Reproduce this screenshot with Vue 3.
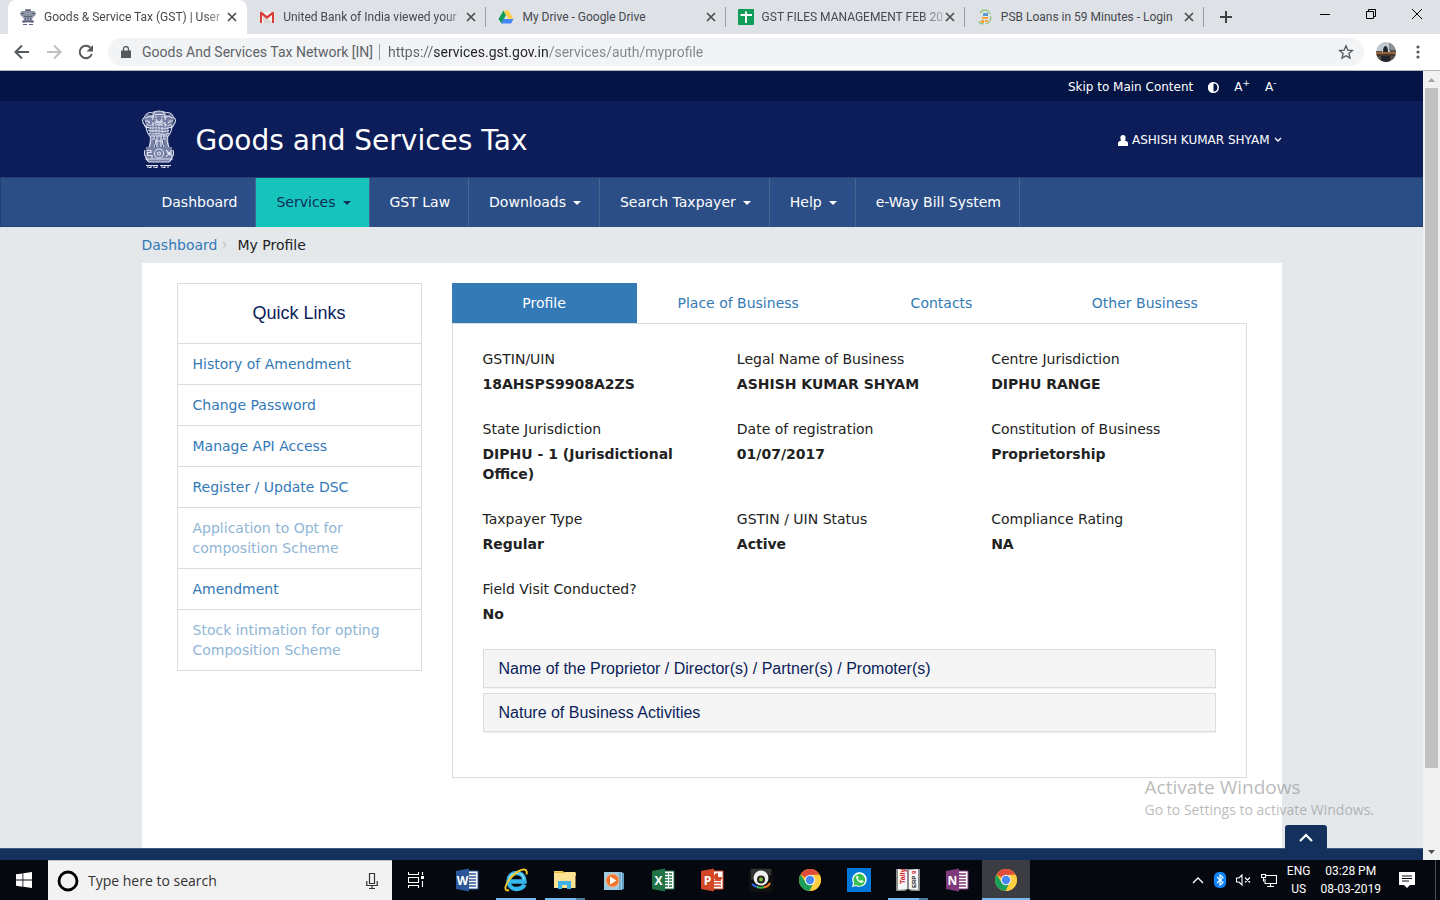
<script setup>
import { ref } from 'vue'

const browserTabs = [
  { title: 'Goods & Service Tax (GST) | User', icon: 'lions', active: true, fade: true },
  { title: 'United Bank of India viewed your', icon: 'gmail', fade: true },
  { title: 'My Drive - Google Drive', icon: 'drive' },
  { title: 'GST FILES MANAGEMENT FEB 20', icon: 'sheets', fade: true },
  { title: 'PSB Loans in 59 Minutes - Login', icon: 'psb' }
]

const url = ref('https://services.gst.gov.in/services/auth/myprofile')
const query = ref('')

const navItems = [
  { label: 'Dashboard' },
  { label: 'Services', menu: true, active: true },
  { label: 'GST Law' },
  { label: 'Downloads', menu: true },
  { label: 'Search Taxpayer', menu: true },
  { label: 'Help', menu: true },
  { label: 'e-Way Bill System' }
]

const quickLinks = [
  { label: 'History of Amendment' },
  { label: 'Change Password' },
  { label: 'Manage API Access' },
  { label: 'Register / Update DSC' },
  { label: 'Application to Opt for composition Scheme', muted: true },
  { label: 'Amendment' },
  { label: 'Stock intimation for opting Composition Scheme', muted: true }
]

const profileTabs = ['Profile', 'Place of Business', 'Contacts', 'Other Business']
const currentTab = ref('Profile')

const fields = [
  ['GSTIN/UIN', '18AHSPS9908A2ZS'],
  ['Legal Name of Business', 'ASHISH KUMAR SHYAM'],
  ['Centre Jurisdiction', 'DIPHU RANGE'],
  ['State Jurisdiction', 'DIPHU - 1 (Jurisdictional Office)'],
  ['Date of registration', '01/07/2017'],
  ['Constitution of Business', 'Proprietorship'],
  ['Taxpayer Type', 'Regular'],
  ['GSTIN / UIN Status', 'Active'],
  ['Compliance Rating', 'NA'],
  ['Field Visit Conducted?', 'No']
]

const sections = [
  'Name of the Proprietor / Director(s) / Partner(s) / Promoter(s)',
  'Nature of Business Activities'
]

const apps = [
  { name: 'Word', icon: 'office', color: '#2b579a', letter: 'W' },
  { name: 'Internet Explorer', icon: 'ie', state: 'open' },
  { name: 'File Explorer', icon: 'folder', state: 'multi' },
  { name: 'Media Player', icon: 'media' },
  { name: 'Excel', icon: 'office', color: '#217346', letter: 'X' },
  { name: 'PowerPoint', icon: 'office', color: '#d24726', letter: 'P' },
  { name: 'Webcam', icon: 'cam' },
  { name: 'Chrome', icon: 'chrome' },
  { name: 'WhatsApp', icon: 'whatsapp' },
  { name: 'Tally', icon: 'tally', state: 'multi' },
  { name: 'OneNote', icon: 'office', color: '#80397b', letter: 'N' },
  { name: 'Chrome window', icon: 'chrome', state: 'focused' }
]
</script>

<template>
  <div class="screen">
    <svg class="defs" width="0" height="0" aria-hidden="true">
      <symbol id="emblem" viewBox="0 0 34 58">
        <path fill="currentColor" opacity=".5" d="M11 1h12l1 4 5-1 3 5-2 7-3 1-2 9H9L7 17l-3-1-2-7 3-5 5 1zM8 26h4l1 11H7zM14 26h6v11h-6zM22 26h4l1 11h-6zM4 39h26l1 8-3 5H6l-3-5z" />
        <g fill="none" stroke="currentColor" stroke-width="1.1">
          <path d="M12 2.500c2-2 8-2 10 0l.5 5M12 2.500l-.5 5M13 4.500h8M13 7h2M19 7h2M14 9c1 4 5 4 6 0M13 11c2 3 6 3 8 0" />
          <path d="M11 3C7 1.500 3 4 2.500 7.500 0 8.500 0 12 2 14c1 3 3 4 5 3.500M23 3c4-1.500 8 1 8.500 4.500C34 8.500 34 12 32 14c-1 3-3 4-5 3.500" />
          <path d="M4 8c2-2 5-2 7 0M30 8c-2-2-5-2-7 0M3 11h3l2 2M31 11h-3l-2 2M10 5l1 5M24 5l-1 5" />
          <path d="M4 15c0 5 2 9 4 11h18c2-2 4-6 4-11" />
          <path stroke-dasharray="2 .8" d="M5 14c2 2 4 2 6 0s4 1 6 1 4-3 6-1 4 2 6 0M5 17c4 2 8 0 12 1s8 1 12-1M6 20c4 2 7 0 11 1s7 1 11-1M7 23c3 2 6 0 10 1s7 1 10-1M11 12v10M14 14v11M17 14v12M20 14v11M23 12v10M8 17v8M26 17v8" />
          <path d="M8 26c2 3 0 9-1 11M12 26c2 3 2 9 0 11M10 29h3M15 26v11M19 26v11M22 26c-2 3-2 9 0 11M26 26c-2 3 0 9 1 11M21 29h3M14 31h6" />
          <path d="M4 38h26M3 40c-1 3-1 6 2 8M31 40c1 3 1 6-2 8M4 49h26l-3 3H7z" />
          <circle cx="17" cy="43.500" r="4.500" />
          <circle cx="17" cy="43.500" r="1.500" />
          <path d="M5 40.500h4v2H5.500v3H10v3M24 40l6 6M30 40l-6 7M25 43h5" />
          <path d="M4 55.500h12M18 55.500h11M6 55.500v2.500M9 55v3M12 56v2M15 55v3M20 55v3M23 56v2M26 55v3M7 57.500h2M13 57.500h2M21 57.500h2" />
        </g>
      </symbol>
      <symbol id="lions" viewBox="0 0 16 16">
        <path fill="#8a91a3" d="M5 0h6v2h3l2 2-1 3-2 1-1 3h1l1 2-1 1H3l-1-1 1-2h1L3 8 1 7 0 4l2-2h3z" />
        <path fill="none" stroke="#5b647c" d="M1 4.500h3M6 1.500h4M12 4.500h3M4 7.500h8M5.500 9v3M8 8.500v3M10.500 9v3M2.500 12.500h11M3 15.500h4M9 15.500h4" />
        <path fill="none" stroke="#d6d9e0" stroke-width=".7" d="M6 4.500h1M9 4.500h1M6 10h1M9 10h1M5 13.500h6" />
      </symbol>
      <symbol id="gmail" viewBox="0 0 16 16">
        <path fill="#f2f2f2" d="M1 3h14v11H1z" />
        <path fill="#d9d9d9" d="M3 5l11 9H5z" />
        <path fill="#d93f34" d="M1 4c0-1 1-1.500 2-1l5 4 5-4c1-.5 2 0 2 1v10h-2V6L8 10 3 6v8H1z" />
      </symbol>
      <symbol id="drive" viewBox="0 0 16 16">
        <path fill="#109d58" d="M5.500 1.500 8 6 3.500 14.500.5 10z" />
        <path fill="#ffcf44" d="M5.500 1.500h5L15.500 10h-5z" />
        <path fill="#4285f4" d="M5.500 10h10l-2.500 4.500H3z" />
      </symbol>
      <symbol id="sheets" viewBox="0 0 16 16">
        <rect width="16" height="16" rx="1" fill="#0f9d58" />
        <path fill="#fff" d="M2.500 5h4.500V2.500h2V5h5v2H9v7H7V7H2.500z" />
      </symbol>
      <symbol id="psb" viewBox="0 0 16 16">
        <path fill="none" stroke="#8fc374" stroke-width="1.200" d="M3 4c2-4 8-4 10 1M13.500 7c1 4-1 7-5 8M7 15c-3 0-5-1-5-3" />
        <path fill="#5b9fc9" d="M6 4h5v3H6z" />
        <path fill="#f5a33b" d="M5 8h6v2H5zM4 11h3v3H4zM8 11h3v2H8z" />
      </symbol>
      <symbol id="chrome" viewBox="0 0 24 24">
        <circle cx="12" cy="12" r="11" fill="#fbc02d" />
        <path fill="#df4b3d" d="M12 12 2.500 6.500A11 11 0 0 1 21.500 6.500L12 7z" />
        <path fill="#ffcd40" d="M12 7h9.700A11 11 0 0 1 12 23l4.300-8.500z" />
        <path fill="#1a9f5b" d="M2.500 6.500 7.700 14.500l4.300 2.500 2.500-.5L11.500 23A11 11 0 0 1 2.500 6.500z" />
        <circle cx="12" cy="12" r="5.200" fill="#f4f4f4" />
        <circle cx="12" cy="12" r="4.200" fill="#4687f4" />
      </symbol>
      <symbol id="ie" viewBox="0 0 24 24">
        <path fill="none" stroke="#35b6ec" stroke-width="4.400" d="M20.500 16.500c-1.500 3-4.500 4.500-8 4.500-5 0-8-3.700-8-8s3.400-8 8-8 8 3.500 8 8.500H6" />
        <path fill="none" stroke="#a4e6ff" stroke-width="1.200" d="M5 11c1-4 4-6 7.500-6 4 0 7 2.500 7.500 6.500" />
        <path fill="none" stroke="#f6c927" stroke-width="1.900" d="M22.500 6.500c.7-3 0-5-2.500-5C14 1.500 3 11.500 1.500 19c-.5 3 1 4 3.500 3" />
      </symbol>
      <symbol id="folder" viewBox="0 0 24 24">
        <path fill="#d9a520" d="M1 3h9l2 2h11v3H1z" />
        <path fill="#fde293" d="M1 5h9l2-1h10.500v16H1z" />
        <path fill="#f8d05d" d="M1 3h8l1 1.500H1z" />
        <path fill="#3fb2ea" d="M5 13h13v8h-4v-4H9v4H5z" />
      </symbol>
      <symbol id="media" viewBox="0 0 24 24">
        <path fill="#5f9cc0" d="m18 4 4 1v16l-4 1z" />
        <path fill="#9ccbe2" d="M2 4h18v18H2z" />
        <path fill="#74add0" d="M17 4h2v18h-2z" />
        <circle cx="10.500" cy="12.500" r="6.500" fill="#f1762b" stroke="#f9b184" />
        <path fill="#fff" d="M8 8.500v8l6.500-4z" />
      </symbol>
      <symbol id="cam" viewBox="0 0 24 24">
        <rect width="24" height="24" rx="3" fill="#111" />
        <path fill="#333" d="M2 1h20v6L2 12z" />
        <path fill="none" stroke="#2b6bea" stroke-width="2" d="M3 16c2 2 4 3 6 3" />
        <path fill="none" stroke="#49b649" stroke-width="2" d="M8 19c3 1 5 1 8 0" />
        <path fill="none" stroke="#f27a25" stroke-width="2" d="M15 19c3 0 5-2 6-4" />
        <circle cx="12" cy="10" r="7.500" fill="#efefef" />
        <circle cx="12" cy="11.500" r="4" fill="#252525" />
        <circle cx="12" cy="11.500" r="2" fill="#7bc142" />
      </symbol>
      <symbol id="whatsapp" viewBox="0 0 24 24">
        <rect width="24" height="24" fill="#0078d7" />
        <path fill="#fff" d="M5 19l1-4a7.300 7.300 0 1 1 3 3z" />
        <path fill="#3ac14f" d="M6.500 17.500 7.200 15a6 6 0 1 1 2 2z" />
        <path fill="#fff" d="M9.500 8c1-.8 1.500 0 2 1.500l-.7 1c.7 1.300 1.500 2 2.700 2.500l1-1 2 1c0 1.700-2 2-3.300 1.500C11 13.500 8.500 11 9.500 8z" />
      </symbol>
    </svg>

    <header class="tabstrip">
      <div class="tabs">
        <div v-for="tab in browserTabs" :key="tab.title" class="tab" :class="{ active: tab.active }">
          <svg class="favicon" width="16" height="16"><use :href="'#' + tab.icon" /></svg>
          <span class="tab-title" :class="{ fade: tab.fade }">{{ tab.title }}</span>
          <button class="tab-close" type="button" aria-label="Close tab">
            <svg width="10" height="10" viewBox="0 0 10 10"><path d="M1 1l8 8M9 1L1 9" stroke="#4a4d51" stroke-width="1.700" /></svg>
          </button>
        </div>
      </div>
      <button class="new-tab" type="button" aria-label="New tab">
        <svg width="14" height="14" viewBox="0 0 14 14"><path d="M7 1v12M1 7h12" stroke="#3c4043" stroke-width="2" /></svg>
      </button>
      <div class="window-controls">
        <button type="button" aria-label="Minimize"><svg width="10" height="10" viewBox="0 0 10 10"><path d="M0 5.500h10" stroke="#000" /></svg></button>
        <button type="button" aria-label="Restore"><svg width="10" height="10" viewBox="0 0 10 10"><path d="M.5 2.500h7v7h-7zM2.500 2.500v-2h7v7h-2" fill="none" stroke="#000" /></svg></button>
        <button type="button" aria-label="Close"><svg width="10" height="10" viewBox="0 0 10 10"><path d="M0 0l10 10M10 0L0 10" stroke="#000" /></svg></button>
      </div>
    </header>

    <div class="toolbar">
      <button class="tool" type="button" aria-label="Back">
        <svg width="16" height="16" viewBox="0 0 16 16"><path d="M15 8H2M8 1.500 1.500 8 8 14.500" fill="none" stroke="#55595e" stroke-width="2" /></svg>
      </button>
      <button class="tool" type="button" aria-label="Forward">
        <svg width="16" height="16" viewBox="0 0 16 16"><path d="M1 8h13M8 1.500 14.500 8 8 14.500" fill="none" stroke="#bcbec1" stroke-width="2" /></svg>
      </button>
      <button class="tool" type="button" aria-label="Reload">
        <svg width="16" height="16" viewBox="0 0 16 16"><path d="M13.800 10A6.200 6.200 0 1 1 12.500 3.700" fill="none" stroke="#55595e" stroke-width="2" /><path d="M15 1v6.500H8.500z" fill="#55595e" /></svg>
      </button>
      <div class="omnibox">
        <button class="site" type="button">
          <svg width="10" height="12" viewBox="0 0 10 12"><path d="M0 4.500h10V12H0z" fill="#55595e" /><path d="M2.500 5V3a2.500 2.500 0 0 1 5 0v2" fill="none" stroke="#55595e" stroke-width="1.300" /></svg>
          <span>Goods And Services Tax Network [IN]</span>
        </button>
        <input v-model="url" class="url" type="text" aria-label="Address" />
        <button class="star" type="button" aria-label="Bookmark">
          <svg width="16" height="16" viewBox="0 0 16 16"><path d="m8 1.800 1.800 4.300 4.700.4-3.600 3 1.100 4.600L8 11.700 4 14.100l1.100-4.600-3.600-3 4.700-.4z" fill="none" stroke="#55595e" stroke-width="1.300" /></svg>
        </button>
      </div>
      <button class="avatar" type="button" aria-label="Account">
        <svg width="20" height="20" viewBox="0 0 20 20">
          <clipPath id="round"><circle cx="10" cy="10" r="10" /></clipPath>
          <g clip-path="url(#round)">
            <path fill="#bfc8cf" d="M0 0h20v20H0z" /><path fill="#8a8f91" d="M13 1h7v8h-7z" />
            <path fill="#45362e" d="M0 12h20v8H0z" /><path fill="#9a6238" d="M0 10h20v2H0z" />
            <path fill="#5c5149" d="M0 9h6v1H0zM14 8h6v2h-6zM2 14h4v5H2zM15 14h4v4h-4z" />
            <path fill="#22252c" d="M7 10c0-4 1-6 2.500-6S12 6 12 10zM5 14h9v6H5z" />
          </g>
        </svg>
      </button>
      <button class="more" type="button" aria-label="More">
        <svg width="4" height="14" viewBox="0 0 4 14"><g fill="#55595e"><circle cx="2" cy="2" r="1.600" /><circle cx="2" cy="7" r="1.600" /><circle cx="2" cy="12" r="1.600" /></g></svg>
      </button>
    </div>

    <div class="viewport">
      <div class="page">
        <div class="topbar">
          <div class="container">
            <a href="#main">Skip to Main Content</a>
            <button type="button" aria-label="Contrast">
              <svg width="11" height="11" viewBox="0 0 11 11"><circle cx="5.500" cy="5.500" r="4.700" fill="none" stroke="#fff" stroke-width="1.600" /><path d="M5.500 0a5.500 5.500 0 0 0 0 11z" fill="#fff" /></svg>
            </button>
            <button type="button">A<sup>+</sup></button>
            <button type="button">A<sup>-</sup></button>
          </div>
        </div>

        <div class="masthead">
          <div class="container">
            <a class="brand" href="#home">
              <svg class="crest" width="34" height="58"><use href="#emblem" /></svg>
              <span>Goods and Services Tax</span>
            </a>
            <button class="user" type="button">
              <svg width="10" height="11" viewBox="0 0 10 11"><path d="M5 0c2 0 2.800 1.500 2.600 3.200 0 1-.3 1.600-.8 2.200 2 .4 3.200 1.200 3.200 3V11H0V8.400c0-1.800 1.200-2.600 3.200-3-.5-.6-.8-1.200-.8-2.200C2.200 1.500 3 0 5 0z" fill="#fff" /></svg>
              <span>ASHISH KUMAR SHYAM</span>
              <svg width="8" height="6" viewBox="0 0 8 6"><path d="M1 1l3 3 3-3" fill="none" stroke="#fff" stroke-width="1.300" /></svg>
            </button>
          </div>
        </div>

        <nav class="mainnav">
          <div class="container">
            <a v-for="item in navItems" :key="item.label" href="#" :class="{ active: item.active }">
              {{ item.label }}<i v-if="item.menu" class="caret"></i>
            </a>
          </div>
        </nav>

        <div class="container crumbs">
          <a href="#">Dashboard</a>
          <svg width="5" height="8" viewBox="0 0 5 8"><path d="M1 1l3 3-3 3" fill="none" stroke="#c6c9cc" stroke-width="1.300" /></svg>
          <span>My Profile</span>
        </div>

        <main id="main" class="container content">
          <aside class="quick">
            <h2>Quick Links</h2>
            <a v-for="link in quickLinks" :key="link.label" href="#" :class="{ muted: link.muted }">{{ link.label }}</a>
          </aside>

          <section class="profile">
            <div class="profile-tabs" role="tablist">
              <button
                v-for="name in profileTabs"
                :key="name"
                type="button"
                role="tab"
                :aria-selected="name === currentTab"
                :class="{ selected: name === currentTab }"
                @click="currentTab = name"
              >{{ name }}</button>
            </div>
            <div class="panel">
              <dl>
                <div v-for="[label, value] in fields" :key="label">
                  <dt>{{ label }}</dt>
                  <dd>{{ value }}</dd>
                </div>
              </dl>
              <button v-for="title in sections" :key="title" class="section" type="button">{{ title }}</button>
            </div>
          </section>
        </main>

        <footer class="footer"></footer>
        <button class="to-top" type="button" aria-label="Back to top">
          <svg width="14" height="9" viewBox="0 0 14 9"><path d="M1 8l6-6 6 6" fill="none" stroke="#fff" stroke-width="2.200" /></svg>
        </button>
      </div>

      <div class="scrollbar">
        <svg width="17" height="17" viewBox="0 0 17 17"><path d="M5 11l3.500-4 3.500 4z" fill="#a3a3a3" /></svg>
        <div class="thumb"></div>
        <div class="rest"></div>
        <svg width="17" height="17" viewBox="0 0 17 17"><path d="M5 7l3.500 4L12 7z" fill="#505050" /></svg>
      </div>

      <div class="watermark">
        <p class="wm-title">Activate Windows</p>
        <p>Go to Settings to activate Windows.</p>
      </div>
    </div>

    <div class="taskbar">
      <button class="start" type="button" aria-label="Start">
        <svg width="16" height="16" viewBox="0 0 16 16"><path fill="#fff" d="M0 2.300 6.500 1.400v6.200H0zM7.300 1.300 16 0v7.600H7.300zM0 8.400h6.500v6.300L0 13.800zM7.300 8.400H16V16l-8.700-1.200z" /></svg>
      </button>
      <label class="search">
        <svg width="22" height="22" viewBox="0 0 22 22"><circle cx="11" cy="11" r="9" fill="none" stroke="#000" stroke-width="2.800" /></svg>
        <input v-model="query" type="text" placeholder="Type here to search" aria-label="Type here to search" />
        <svg width="12" height="16" viewBox="0 0 12 16"><path d="M3.500.5h5v10h-5zM.8 8v4.500h10.400V8M6 13v2.500M3 15.500h6" fill="none" stroke="#333" stroke-width="1.200" /></svg>
      </label>
      <button class="taskview" type="button" aria-label="Task view">
        <svg width="16" height="16" viewBox="0 0 16 16"><path d="M.5 0v2.500h10V0M.5 16v-2.500h10V16M.5 5.500h10v5H.5zM14.500 0v3M14.500 9v6" fill="none" stroke="#fff" stroke-width="1.100" /><path d="M13 4h3v3h-3z" fill="#fff" /></svg>
      </button>
      <div class="apps">
        <button v-for="app in apps" :key="app.name" type="button" class="app" :class="app.state" :aria-label="app.name">
          <svg v-if="app.icon === 'office'" width="24" height="24" viewBox="0 0 24 24">
            <path d="M12 3h11v18H12z" fill="#fff" :stroke="app.color" />
            <path d="M14 6h7M14 9h7M14 12h7M14 15h7M14 18h7" :stroke="app.color" stroke-width="1.400" />
            <path v-if="app.letter === 'X'" d="M17.500 4v16" stroke="#fff" />
            <path v-if="app.letter === 'P'" d="M14 4h8v8h-8z" fill="#fff" />
            <path v-if="app.letter === 'P'" d="M18 5v4h4a4 4 0 1 1-4-4z" :fill="app.color" />
            <path d="M1 3l13-2.500v23L1 21z" :fill="app.color" />
            <text x="7.500" y="16.500" text-anchor="middle" font-size="12" font-weight="700" font-family="Open Sans, sans-serif" fill="#fff">{{ app.letter }}</text>
          </svg>
          <svg v-else-if="app.icon === 'tally'" width="24" height="24" viewBox="0 0 24 24">
            <path fill="#8b8b8b" d="M0 1h24v22h-9l-3-2-3 2H0z" /><path fill="#f7f7f7" d="M2 1l9 1v19l-9 1zM22 1l-9 1v19l9 1z" />
            <text transform="translate(9 16) rotate(-90)" font-size="7" font-weight="700" font-family="Liberation Sans, sans-serif" fill="#d8232a">Tally</text>
            <text transform="translate(20 20) rotate(-90)" font-size="6" font-weight="700" font-family="Liberation Sans, sans-serif" fill="#111">ERP <tspan fill="#d8232a">9</tspan></text>
          </svg>
          <svg v-else width="24" height="24"><use :href="'#' + app.icon" /></svg>
        </button>
      </div>
      <div class="tray">
        <button type="button" aria-label="Hidden icons"><svg width="12" height="8" viewBox="0 0 12 8"><path d="M1 7l5-5 5 5" fill="none" stroke="#fff" stroke-width="1.300" /></svg></button>
        <button type="button" aria-label="Bluetooth"><svg width="12" height="16" viewBox="0 0 12 16"><rect width="12" height="16" rx="5" fill="#0a84ff" /><path d="M3 5l6 5.500-3 2.500V3l3 2.500L3 11" fill="none" stroke="#fff" stroke-width="1.100" /></svg></button>
        <button type="button" aria-label="Volume muted"><svg width="15" height="12" viewBox="0 0 15 12"><path d="M.5 4h2.500L6 1v10L3 8H.5zM9 3.500l5 5M14 3.500l-5 5" fill="none" stroke="#fff" stroke-width="1.100" /></svg></button>
        <button type="button" aria-label="Network"><svg width="16" height="14" viewBox="0 0 16 14"><path d="M5 2.500h10.500v8H4V6M9.500 10.500v3M6 13.500h7M.5 1.500h4v3h-4zM2.500 4.500v4" fill="none" stroke="#fff" stroke-width="1.100" /></svg></button>
        <button type="button">ENG<br />US</button>
        <button type="button">03:28 PM<br />08-03-2019</button>
        <button class="notes" type="button" aria-label="Notifications"><svg width="16" height="16" viewBox="0 0 16 16"><path d="M0 0h16v13h-5l-3 3-3-3H0z" fill="#fff" /><path d="M3 4h10M3 6.500h10M3 9h7" stroke="#05080f" /></svg></button>
      </div>
    </div>
  </div>
</template>

<style>
body {
  margin: 0;
}
</style>

<style scoped>
* {
  box-sizing: border-box;
}

button,
input {
  margin: 0;
  padding: 0;
  border: 0;
  background: none;
  color: inherit;
  font: inherit;
  outline: 0;
}

a {
  text-decoration: none;
}

svg {
  display: block;
  flex: none;
}

.defs {
  position: absolute;
}

.screen {
  display: flex;
  flex-direction: column;
  height: 100vh;
  overflow: hidden;
  font-family: "Open Sans", sans-serif;
}

/* Browser chrome */
.tabstrip {
  display: flex;
  flex: none;
  height: 34px;
  padding-left: 8px;
  background: #dee1e6;
}

.tabs {
  display: flex;
  flex: 0 1 1196px;
  min-width: 0;
}

.tab {
  display: flex;
  flex: 1;
  align-items: center;
  min-width: 0;
  padding: 0 10px 0 12px;
  color: #45494e;
  font: 12px/16px Roboto, sans-serif;
  position: relative;
}

.tab.active {
  border-radius: 8px 8px 0 0;
  background: #fff;
}

.tab:not(.active)::after {
  position: absolute;
  right: 0;
  width: 1px;
  height: 20px;
  background: #9a9da2;
  content: "";
}

.favicon {
  margin-right: 8px;
}

.tab-title {
  flex: 1;
  overflow: hidden;
  white-space: nowrap;
}

.tab-title.fade {
  mask-image: linear-gradient(to right, #000 calc(100% - 24px), rgba(0, 0, 0, 0.2));
}

.tab-close {
  display: grid;
  place-items: center;
  width: 10px;
  height: 16px;
}

.new-tab {
  display: grid;
  place-items: center;
  width: 44px;
}

.window-controls {
  display: flex;
  height: 28px;
  margin-left: auto;
}

.window-controls button {
  display: grid;
  place-items: center;
  width: 46px;
}

.toolbar {
  display: flex;
  flex: none;
  align-items: center;
  height: 37px;
  padding: 0 8px 0 6px;
  border-bottom: 1px solid #b6b4b6;
  background: #fff;
}

.tool {
  display: grid;
  place-items: center;
  width: 32px;
  height: 28px;
}

.omnibox {
  display: flex;
  flex: 1;
  align-items: center;
  height: 28px;
  margin: 0 12px 0 6px;
  padding: 0 10px 0 13px;
  border-radius: 14px;
  background: #f1f3f4;
  color: #5f6368;
  font-family: Roboto, sans-serif;
  font-size: 14px;
}

.site {
  display: flex;
  align-items: center;
  gap: 11px;
  padding-right: 6px;
  border-right: 1px solid #9a9da2;
  line-height: 16px;
  white-space: nowrap;
}

.url {
  flex: 1;
  min-width: 0;
  height: 20px;
  margin-left: 8px;
  background: linear-gradient(to right, #5f6368 46px, #202124 46px 160px, #80868b 160px);
  background-clip: text;
  color: transparent;
  caret-color: #202124;
}

.avatar {
  margin-right: 20px;
}

.more {
  padding: 0 12px 0 0;
}

/* Portal */
.viewport {
  display: flex;
  flex: 1;
  min-height: 0;
  position: relative;
}

.page {
  display: flex;
  flex: 1;
  flex-direction: column;
  min-width: 0;
  background: #e4e8eb;
  color: #222;
  font-family: "DejaVu Sans", Verdana, sans-serif;
  font-size: 14px;
  line-height: 20px;
  position: relative;
}

.container {
  width: 100%;
  max-width: 1140px;
  margin: 0 auto;
}

.topbar {
  background: #041445;
  color: #fff;
  font-size: 12px;
}

.topbar .container {
  display: flex;
  align-items: center;
  justify-content: flex-end;
  gap: 15px;
  height: 30px;
  padding: 2px 5px 0 0;
}

.topbar a {
  color: inherit;
}

.topbar sup {
  font-size: 9px;
  line-height: 0;
}

.masthead {
  background: #0c1d5a;
  color: #fff;
}

.masthead .container {
  display: flex;
  align-items: center;
  justify-content: space-between;
  height: 76px;
}

.brand {
  display: flex;
  align-items: center;
  gap: 20px;
  color: inherit;
  font-size: 28px;
  line-height: 36px;
}

.brand span {
  padding-top: 3px;
}

.crest {
  color: #dfe3f0;
}

.user {
  display: flex;
  align-items: center;
  gap: 4px;
  padding-top: 2px;
  font-size: 12px;
}

.mainnav {
  border: 1px solid #20416f;
  background: #2c4e86;
}

.mainnav .container {
  display: flex;
  height: 49px;
  margin-bottom: -1px;
  background: #2c4e86;
}

.mainnav a {
  display: flex;
  align-items: center;
  padding: 0 18px 2px 20px;
  border-right: 1px solid #47658f;
  color: #fff;
  white-space: nowrap;
}

.mainnav a.active {
  background: #17c4bb;
  color: #0c2c5c;
}

.caret {
  margin: 3px 0 0 7px;
  border: 4px solid transparent;
  border-top-color: currentColor;
  border-bottom: 0;
}

.crumbs {
  display: flex;
  align-items: center;
  gap: 5px;
  padding: 8px 0;
}

.crumbs a {
  color: #337ab7;
}

.crumbs span {
  margin-left: 5px;
}

.content {
  display: grid;
  flex: 1;
  grid-template-columns: 245px 1fr;
  align-items: start;
  gap: 30px;
  padding: 20px 35px;
  background: #fff;
}

.quick {
  border: 1px solid #dcdcdc;
}

.quick h2 {
  margin: 0;
  padding: 19px 0;
  color: #0b1e59;
  font: 400 18px/21px "Liberation Sans", Arial, sans-serif;
  text-align: center;
}

.quick a {
  display: block;
  padding: 10px 15px;
  border-top: 1px solid #dcdcdc;
  color: #337ab7;
}

.quick a.muted {
  color: #8fb5d6;
}

.profile-tabs {
  display: flex;
}

.profile-tabs button {
  flex: 1;
  height: 40px;
  color: #337ab7;
}

.profile-tabs button:first-child {
  flex: 0 0 185px;
}

.profile-tabs .selected {
  background: #337ab7;
  color: #fff;
}

.panel {
  padding: 25px 30px 45px;
  border: 1px solid #dcdcdc;
}

dl {
  display: grid;
  grid-template-columns: repeat(3, 1fr);
  row-gap: 25px;
  margin: 0 -30px 25px 0;
}

dl div {
  padding-right: 30px;
}

dd {
  margin: 5px 0 0;
  font-weight: 700;
}

.section {
  display: block;
  width: 100%;
  margin-bottom: 5px;
  padding: 9px 15px;
  border: 1px solid #dcdcdc;
  background: #f5f5f5;
  box-shadow: 0 1px 1px rgba(0, 0, 0, 0.05);
  color: #0b1e59;
  font: 16px/19px "Liberation Sans", Arial, sans-serif;
  text-align: left;
}

.section:last-child {
  margin-bottom: 0;
}

.footer {
  flex: none;
  height: 12px;
  border-top: 1px solid #44597b;
  background: #14315d;
}

.to-top {
  display: grid;
  place-items: center;
  position: absolute;
  right: 96px;
  bottom: 10px;
  width: 42px;
  height: 25px;
  border-radius: 3px 3px 0 0;
  background: #14315d;
}

.scrollbar {
  display: flex;
  flex: none;
  flex-direction: column;
  width: 17px;
  background: #f1f1f1;
}

.thumb {
  flex: 9;
  margin: 0 2px;
  background: #c1c1c1;
}

.rest {
  flex: 1;
}

.watermark {
  position: absolute;
  right: 66px;
  bottom: 40px;
  color: rgba(140, 140, 140, 0.6);
  font-size: 14px;
  line-height: 20px;
  pointer-events: none;
}

.watermark p {
  margin: 0;
}

.watermark .wm-title {
  font-size: 19px;
  line-height: 25px;
}

/* Taskbar */
.taskbar {
  display: flex;
  flex: none;
  height: 40px;
  background: #05080f;
  color: #fff;
}

.start,
.taskview {
  display: grid;
  place-items: center;
  width: 48px;
}

.search {
  display: flex;
  flex: 0 1 344px;
  align-items: center;
  gap: 9px;
  padding: 0 14px 0 9px;
  border-top: 1px solid #bcbcbc;
  background: #f2f2f2;
}

.search input {
  flex: 1;
  min-width: 0;
  color: #333;
  font-size: 14px;
}

.search input::placeholder {
  color: #333;
  opacity: 1;
}

.apps {
  display: flex;
  gap: 1px;
  margin-left: 3px;
}

.app {
  display: grid;
  place-items: center;
  width: 48px;
  position: relative;
}

.open::after,
.multi::after,
.focused::after {
  position: absolute;
  right: 4px;
  bottom: 0;
  left: 4px;
  height: 2px;
  background: #76b9ed;
  content: "";
}

.multi::after {
  background: linear-gradient(to right, #76b9ed 31px, #4a7ba3 31px);
}

.focused {
  background: #3b3d42;
}

.focused::after {
  right: 0;
  left: 0;
}

.tray {
  display: flex;
  align-items: center;
  gap: 10px;
  margin: 0 4px 0 auto;
  padding-right: 20px;
  border-right: 1px solid #4a4d52;
  font: 12px/18px Roboto, sans-serif;
}

.notes {
  margin-left: 8px;
}
</style>
